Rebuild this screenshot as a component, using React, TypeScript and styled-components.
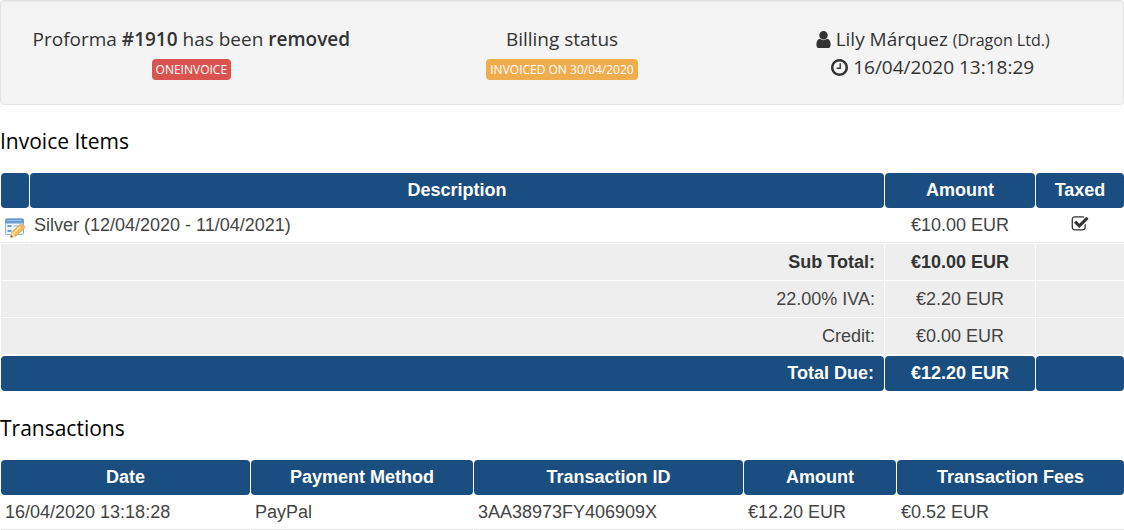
import React from "react";
import styled, { createGlobalStyle } from "styled-components";

const GlobalStyle = createGlobalStyle`
  * { box-sizing: border-box; }
  body {
    margin: 0;
    background: #fff;
    color: #333;
    font-family: "Liberation Sans", Arial, sans-serif;
    font-size: 18px;
  }
`;

const Page = styled.main`
  overflow: hidden;
`;

const Well = styled.section`
  display: grid;
  grid-template-columns: repeat(3, 1fr);
  padding: 24px 5px 23px;
  border: 1px solid #e3e3e3;
  border-radius: 4px;
  background: #f4f4f4;
  box-shadow: inset 0 1px 1px rgba(0, 0, 0, 0.05);
  font-family: "Open Sans", sans-serif;
  font-size: 19px;
  font-weight: 400;
  line-height: 28px;
`;

const StatusColumn = styled.div`
  display: flex;
  flex-direction: column;
  align-items: center;
`;

const Line = styled.div`
  display: flex;
  align-items: center;
  gap: 5px;
  height: 28px;
  white-space: nowrap;
`;

const Strong = styled.strong`
  font-weight: 600;
`;

const Company = styled.small`
  font-size: 16px;
`;

const Tag = styled.span<{ $color: string }>`
  height: 21px;
  margin-top: 4px;
  padding: 0 4px;
  border-radius: 4px;
  background: ${(p) => p.$color};
  color: #fff;
  font-size: 12px;
  font-weight: 500;
  line-height: 21px;
`;

const Glyph = styled.svg`
  display: block;
  flex: none;
  fill: currentColor;
`;

const Heading = styled.h2`
  margin: 0;
  padding: 22px 0 16px;
  color: #000;
  font-family: "Open Sans", sans-serif;
  font-size: 21px;
  font-weight: 400;
  line-height: 29px;
`;

const Table = styled.table`
  width: calc(100% + 1px);
  table-layout: fixed;
  border-collapse: separate;
  border-spacing: 1px;
  line-height: 21px;
`;

const Col = styled.col<{ $width?: string }>`
  width: ${(p) => p.$width ?? "auto"};
`;

const HeadCell = styled.th<{ $align?: string }>`
  height: 35px;
  padding: 0 10px;
  border-radius: 4px;
  background: #1a4d80;
  color: #fff;
  font-weight: 700;
  text-align: ${(p) => p.$align ?? "center"};
`;

const Cell = styled.td<{ $align?: string }>`
  height: 34px;
  padding: 0 4px;
  border-bottom: 1px solid #e8e8e8;
  color: #444;
  text-align: ${(p) => p.$align ?? "left"};

  & > svg {
    margin: 0 auto 3px;
    color: #333;
  }
`;

const SumCell = styled.td<{ $align?: string; $bold?: boolean }>`
  height: 36px;
  padding: 0 9px;
  background: #eee;
  color: ${(p) => (p.$bold ? "#333" : "#444")};
  font-weight: ${(p) => (p.$bold ? 700 : 400)};
  text-align: ${(p) => p.$align ?? "center"};

  tr:last-child > & {
    height: 37px;
    border-bottom: 1px solid #fff;
  }
`;

const EditLink = styled.a`
  display: block;
  width: 20px;
  padding-top: 4px;
`;

const UserIcon = () => (
  <Glyph width="15" height="17" viewBox="256 128 1280 1536" aria-hidden="true">
    <path d="M1536 1399q0 109-62.5 187t-150.5 78h-854q-88 0-150.5-78t-62.5-187q0-85 8.5-160.5t31.5-152 58.5-131 94-89 134.5-34.5q131 128 313 128t313-128q76 0 134.5 34.5t94 89 58.5 131 31.5 152 8.5 160.5zm-256-887q0 159-112.5 271.5t-271.5 112.5-271.5-112.5-112.5-271.5 112.5-271.5 271.5-112.5 271.5 112.5 112.5 271.5z" />
  </Glyph>
);

const ClockIcon = () => (
  <Glyph width="17" height="17" viewBox="128 128 1536 1536" aria-hidden="true">
    <path d="M1024 544v448q0 14-9 23t-23 9h-320q-14 0-23-9t-9-23v-64q0-14 9-23t23-9h224v-352q0-14 9-23t23-9h64q14 0 23 9t9 23zm416 352q0-148-73-273t-198-198-273-73-273 73-198 198-73 273 73 273 198 198 273 73 273-73 198-198 73-273zm224 0q0 209-103 385.5t-279.5 279.5-385.5 103-385.5-103-279.5-279.5-103-385.5 103-385.5 279.5-279.5 385.5-103 385.5 103 279.5 279.5 103 385.5z" />
  </Glyph>
);

const CheckIcon = () => (
  <Glyph width="18" height="18" viewBox="0 0 1792 1792" role="img" aria-label="Taxed">
    <path d="M1472 930v318q0 119-84.5 203.5t-203.5 84.5h-832q-119 0-203.5-84.5t-84.5-203.5v-832q0-119 84.5-203.5t203.5-84.5h832q63 0 117 25 15 7 18 23 3 17-9 29l-49 49q-10 10-23 10-3 0-9-2-23-6-45-6h-832q-66 0-113 47t-47 113v832q0 66 47 113t113 47h832q66 0 113-47t47-113v-254q0-13 9-22l64-64q10-10 23-10 6 0 12 3 20 8 20 29zm231-489l-814 814q-24 24-57 24t-57-24l-430-430q-24-24-24-57t24-57l110-110q24-24 57-24t57 24l263 263 647-647q24-24 57-24t57 24l110 110q24 24 24 57t-24 57z" />
  </Glyph>
);

const EditIcon = () => (
  <Glyph width="20" height="20" viewBox="0 0 20 20" aria-hidden="true">
    <rect x="0.5" y="1" width="18" height="15.5" rx="1.2" fill="#eef5fd" stroke="#8fb0d9" />
    <path d="M0.5 5V2.2Q0.5 1 1.7 1h15.6q1.2 0 1.2 1.2V5z" fill="#6c9bd8" stroke="#6f9ad2" />
    <path d="M2 2.6h15" stroke="#9cc0ee" />
    <path d="M2.5 8h4M2.5 13h4" stroke="#6f9ad2" strokeWidth="2" />
    <path d="M8.5 8h7M8.5 13h5" stroke="#b9d0ee" strokeWidth="2" />
    <path d="M5.5 19.3l1.3-5 8.6-8q1.2-.9 2.5.4l1.2 1.4q1 1.2-.1 2.3l-8.6 7.9z" fill="#f5c04c" stroke="#cf9a4a" strokeWidth="0.8" />
    <path d="M8.5 15.2l7.8-7.3" stroke="#ffe694" strokeWidth="1.5" />
    <path d="M14.2 7.4l1.2-1.1q1.2-.9 2.5.4l1.2 1.4q1 1.2-.1 2.3l-1 1z" fill="#f3b07c" />
    <path d="M5.5 19.3l1.3-5 3.6 4z" fill="#f4d9ad" />
    <path d="M5.5 19.3l.6-2.3 1.7 1.7z" fill="#5a4a3a" />
  </Glyph>
);

const sums = [
  { label: "Sub Total:", amount: "€10.00 EUR", bold: true },
  { label: "22.00% IVA:", amount: "€2.20 EUR" },
  { label: "Credit:", amount: "€0.00 EUR" },
];

const transactionColumns = [
  { title: "Date", width: "22.25%" },
  { title: "Payment Method", width: "19.84%" },
  { title: "Transaction ID", width: "24.04%" },
  { title: "Amount", width: "13.58%" },
  { title: "Transaction Fees" },
];

const transaction = [
  "16/04/2020 13:18:28",
  "PayPal",
  "3AA38973FY406909X",
  "€12.20 EUR",
  "€0.52 EUR",
];

export default function App() {
  return (
    <>
      <GlobalStyle />
      <Page>
        <Well>
          <StatusColumn>
            <Line>
              <span>
                Proforma <Strong>#1910</Strong> has been <Strong>removed</Strong>
              </span>
            </Line>
            <Line>
              <Tag $color="#d9534f">ONEINVOICE</Tag>
            </Line>
          </StatusColumn>
          <StatusColumn>
            <Line>Billing status</Line>
            <Line>
              <Tag $color="#f0ad4e">INVOICED ON 30/04/2020</Tag>
            </Line>
          </StatusColumn>
          <StatusColumn>
            <Line>
              <UserIcon />
              <span>
                Lily Márquez <Company>(Dragon Ltd.)</Company>
              </span>
            </Line>
            <Line>
              <ClockIcon />
              16/04/2020 13:18:29
            </Line>
          </StatusColumn>
        </Well>

        <Heading>Invoice Items</Heading>
        <Table>
          <colgroup>
            <Col $width="28px" />
            <Col />
            <Col $width="150px" />
            <Col $width="88px" />
          </colgroup>
          <thead>
            <tr>
              <HeadCell />
              <HeadCell>Description</HeadCell>
              <HeadCell>Amount</HeadCell>
              <HeadCell>Taxed</HeadCell>
            </tr>
          </thead>
          <tbody>
            <tr>
              <Cell>
                <EditLink href="#edit" aria-label="Edit item">
                  <EditIcon />
                </EditLink>
              </Cell>
              <Cell>Silver (12/04/2020 - 11/04/2021)</Cell>
              <Cell $align="center">€10.00 EUR</Cell>
              <Cell>
                <CheckIcon />
              </Cell>
            </tr>
            {sums.map((sum) => (
              <tr key={sum.label}>
                <SumCell colSpan={2} $align="right" $bold={sum.bold}>
                  {sum.label}
                </SumCell>
                <SumCell $bold={sum.bold}>{sum.amount}</SumCell>
                <SumCell />
              </tr>
            ))}
          </tbody>
          <tfoot>
            <tr>
              <HeadCell colSpan={2} $align="right">
                Total Due:
              </HeadCell>
              <HeadCell>€12.20 EUR</HeadCell>
              <HeadCell />
            </tr>
          </tfoot>
        </Table>

        <Heading>Transactions</Heading>
        <Table>
          <colgroup>
            {transactionColumns.map((column) => (
              <Col key={column.title} $width={column.width} />
            ))}
          </colgroup>
          <thead>
            <tr>
              {transactionColumns.map((column) => (
                <HeadCell key={column.title}>{column.title}</HeadCell>
              ))}
            </tr>
          </thead>
          <tbody>
            <tr>
              {transaction.map((value) => (
                <Cell key={value}>{value}</Cell>
              ))}
            </tr>
          </tbody>
        </Table>
      </Page>
    </>
  );
}
